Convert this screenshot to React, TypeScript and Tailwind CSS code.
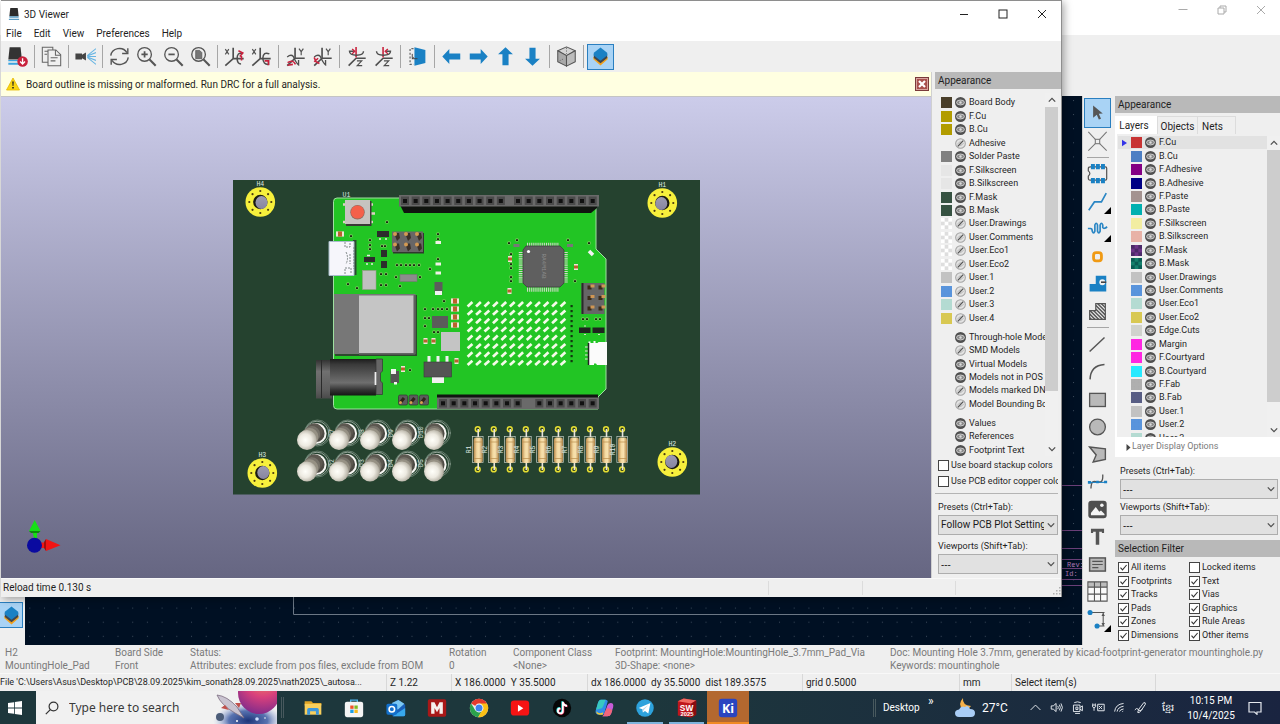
import { useState, type ReactNode } from "react";

/* ---------- shared data ---------- */

type Layer = { name: string; color?: string; on: boolean };

const viewerLayers: Layer[] = [
  { name: "Board Body", color: "#4a3f2a", on: true },
  { name: "F.Cu", color: "#b29c00", on: true },
  { name: "B.Cu", color: "#b29c00", on: true },
  { name: "Adhesive", on: false },
  { name: "Solder Paste", color: "#808080", on: true },
  { name: "F.Silkscreen", color: "#e6e6e6", on: true },
  { name: "B.Silkscreen", color: "#e6e6e6", on: true },
  { name: "F.Mask", color: "#365242", on: true },
  { name: "B.Mask", color: "#365242", on: true },
  { name: "User.Drawings", color: "checker", on: false },
  { name: "User.Comments", color: "checker", on: false },
  { name: "User.Eco1", color: "checker", on: false },
  { name: "User.Eco2", color: "checker", on: false },
  { name: "User.1", color: "#c2c2c2", on: false },
  { name: "User.2", color: "#5994dc", on: false },
  { name: "User.3", color: "#b4dbd2", on: false },
  { name: "User.4", color: "#d8c852", on: false },
];

const modelLayers: Layer[] = [
  { name: "Through-hole Models", on: true },
  { name: "SMD Models", on: false },
  { name: "Virtual Models", on: true },
  { name: "Models not in POS File", on: true },
  { name: "Models marked DNP", on: false },
  { name: "Model Bounding Boxes", on: false },
];

const textLayers: Layer[] = [
  { name: "Values", on: true },
  { name: "References", on: true },
  { name: "Footprint Text", on: true },
];

const editorLayers: Layer[] = [
  { name: "F.Cu", color: "#c83434", on: true },
  { name: "B.Cu", color: "#4d7fc4", on: true },
  { name: "F.Adhesive", color: "#840084", on: true },
  { name: "B.Adhesive", color: "#000084", on: true },
  { name: "F.Paste", color: "#a49390", on: true },
  { name: "B.Paste", color: "#00b0b0", on: true },
  { name: "F.Silkscreen", color: "#f2eda1", on: true },
  { name: "B.Silkscreen", color: "#e8b2a7", on: true },
  { name: "F.Mask", color: "mask-f", on: true },
  { name: "B.Mask", color: "mask-b", on: true },
  { name: "User.Drawings", color: "#c2c2c2", on: true },
  { name: "User.Comments", color: "#5994dc", on: true },
  { name: "User.Eco1", color: "#b4dbd2", on: true },
  { name: "User.Eco2", color: "#d8c852", on: true },
  { name: "Edge.Cuts", color: "#d0d2cd", on: true },
  { name: "Margin", color: "#ff26e2", on: true },
  { name: "F.Courtyard", color: "#ff26e2", on: true },
  { name: "B.Courtyard", color: "#26e9ff", on: true },
  { name: "F.Fab", color: "#afafaf", on: true },
  { name: "B.Fab", color: "#585d84", on: true },
  { name: "User.1", color: "#c2c2c2", on: true },
  { name: "User.2", color: "#5994dc", on: true },
  { name: "User.3", color: "#b4dbd2", on: true },
];

/* ---------- small parts ---------- */

function Swatch({ color }: { color?: string }) {
  if (!color) return <span className="size-[11px] shrink-0" />;
  const pair =
    color === "checker" ? ["#ffffff", "#dedede"] : color === "mask-f" ? ["#4a2a68", "#6c3488"] : color === "mask-b" ? ["#0a5c54", "#14806c"] : [color, color];
  return (
    <svg viewBox="0 0 12 12" className="size-[11px] shrink-0" aria-hidden="true">
      <rect width="12" height="12" fill={pair[0]} />
      {[0, 1, 2].flatMap((r) =>
        [0, 1, 2].filter((c) => (r + c) % 2 === 1).map((c) => <rect key={`${r}${c}`} x={c * 4} y={r * 4} width="4" height="4" fill={pair[1]} />),
      )}
    </svg>
  );
}

function Eye({ on }: { on: boolean }) {
  return on ? (
    <svg viewBox="0 0 12 12" className="size-[11px]" aria-hidden="true">
      <circle cx="6" cy="6" r="6" fill="#505050" />
      <ellipse cx="6" cy="6" rx="4.3" ry="2.7" fill="#8a8a8a" stroke="#dcdcdc" strokeWidth="0.9" />
      <circle cx="6" cy="6" r="1.3" fill="#dcdcdc" />
    </svg>
  ) : (
    <svg viewBox="0 0 12 12" className="size-[11px]" aria-hidden="true">
      <circle cx="6" cy="6" r="5.3" fill="#e2e2e2" stroke="#a4a4a4" strokeWidth="1.1" />
      <path d="M2.600 7 Q4 4 7 4 M5 8.400 Q8 8 9.400 5.400" fill="none" stroke="#b0b0b0" strokeWidth="0.900" />
      <path d="M3 9.200 L9 2.800" stroke="#555" strokeWidth="1.400" />
    </svg>
  );
}

function LayerRow({ layer, active, marker }: { layer: Layer; active?: boolean; marker?: boolean }) {
  const [on, setOn] = useState(layer.on);
  return (
    <li className={active ? "flex min-h-0 items-center bg-[#e2e2e2]" : "flex min-h-0 items-center"}>
      {marker && (
        <svg viewBox="0 0 6 8" className="mr-1 ml-1 h-2 w-[5px] shrink-0" aria-hidden="true">
          {active && <path d="M0 0 L6 4 L0 8Z" fill="#3434e8" />}
        </svg>
      )}
      <Swatch color={layer.color} />
      <button type="button" aria-label={`Toggle ${layer.name}`} onClick={() => setOn(!on)} className="mx-[3px] shrink-0">
        <Eye on={on} />
      </button>
      <span className="text-[9px] leading-[13px] whitespace-nowrap">{layer.name}</span>
    </li>
  );
}

function Chevron({ down = false, className = "" }: { down?: boolean; className?: string }) {
  return (
    <svg viewBox="0 0 8 8" className={`size-2 ${className}`} fill="none" stroke="#505050" strokeWidth="1.3" aria-hidden="true">
      <path d={down ? "M0.8 2.4 L4 5.6 L7.2 2.4" : "M0.8 5.6 L4 2.4 L7.2 5.6"} />
    </svg>
  );
}

function ScrollBar({ thumb }: { thumb: string }) {
  return (
    <div className="flex w-[13px] shrink-0 flex-col items-center bg-[#f0f0f0]" aria-hidden="true">
      <div className="flex h-[14px] items-center"><Chevron /></div>
      <div className={`w-full bg-[#cdcdcd] ${thumb}`} />
      <div className="mt-auto flex h-[14px] items-center"><Chevron down /></div>
    </div>
  );
}

function Picker({ id, label, value }: { id: string; label: string; value?: string }) {
  return (
    <div className="flex flex-col">
      <label htmlFor={id} className="text-[9px] leading-[16px]">{label}</label>
      <div className="relative">
        <select
          id={id}
          className={
            value
              ? "block h-5 w-full appearance-none overflow-hidden border border-[#adadad] bg-[#e1e1e1] pr-[13px] pl-[2px] text-[10px] leading-[18px] text-clip text-[#1a1a1a]"
              : "block h-5 w-full appearance-none overflow-hidden border border-[#adadad] bg-[#e1e1e1] pr-[13px] pl-[2px] font-['Noto_Sans',sans-serif] text-[10px] leading-[18px] text-[#1a1a1a]"
          }
        >
          <option>{value ?? "---"}</option>
        </select>
        <Chevron down className="pointer-events-none absolute top-[6px] right-[3px]" />
      </div>
    </div>
  );
}

function Check({ label, checked = false }: { label: string; checked?: boolean }) {
  const [value, setValue] = useState(checked);
  return (
    <label className="flex min-h-0 items-center gap-[2px] overflow-hidden text-[9px] leading-[13px] whitespace-nowrap">
      <span className="relative flex size-[11px] shrink-0">
        <input type="checkbox" checked={value} onChange={() => setValue(!value)} className="size-[11px] appearance-none border border-[#444] bg-white" />
        {value && (
          <svg viewBox="0 0 11 11" className="pointer-events-none absolute inset-0" fill="none" stroke="#333" strokeWidth="1.1" aria-hidden="true">
            <path d="M2.5 5.6 L4.5 7.8 L8.6 3" />
          </svg>
        )}
      </span>
      {label}
    </label>
  );
}

function PanelTitle({ children }: { children: ReactNode }) {
  return <h2 className="h-[17px] shrink-0 bg-[#b9b9b9] px-[3px] text-[10px] leading-[17px]">{children}</h2>;
}

function LayersGlyph() {
  return (
    <svg viewBox="0 0 22 22" className="size-[21px]" aria-hidden="true">
      <path d="M3.500 11.500 H18.500 V14 L11 20.500 L3.500 14Z" fill="#f2a11c" />
      <path d="M4 8 H18 V12.500 L11 18 L4 12.500Z" fill="#3f4650" />
      <path d="M11 1.500 L18 7 V10 L11 15.500 L4 10 V7Z" fill="#1a81c4" />
    </svg>
  );
}

/* ---------- 3D viewer toolbar ---------- */

const AXIS = "#4f4f4f";
const RED = "#c8203c";

const viewerTools: ({ label: string; icon: ReactNode; active?: boolean } | null)[] = [
  {
    label: "Reload board",
    icon: (
      <g>
        <path d="M3 1.500 h12.500 l1.500 14 h-15.500Z" fill="#333" />
        <path d="M1.500 16 h13 v1.500 h-13Z M1.500 19 h13 v2.500 h-13Z" fill="#3ba3df" />
        <circle cx="17.800" cy="17.800" r="6" fill="#c8203c" />
        <path d="M17.800 14 v6.500 M15 17.800 l2.800 2.800 2.800 -2.800" fill="none" stroke="#fff" strokeWidth="1.500" />
      </g>
    ),
  },
  null,
  {
    label: "Copy image",
    icon: (
      <g fill="#efefef" stroke="#666" strokeWidth="1.200">
        <path d="M1.500 1.500 h12 v17 h-12Z M4 6 h4 M4 9.500 h3" />
        <path d="M8 4.500 h9 l5.500 5.500 v12.500 h-14.500Z M16.500 4.500 v6 h6 M11 13.500 h8 M11 17 h5.500" />
      </g>
    ),
  },
  null,
  {
    label: "Raytracing",
    icon: (
      <g>
        <path d="M0.500 8.500 h7.500 v1.500 l4.500 -2.500 v9 l-4.500 -2.500 v1.500 h-7.500Z" fill="#444" />
        <path d="M14 11 L24 3 M14 11.500 L24 7.500 M14 12 H24 M14 12.500 L24 16.500 M14 13 L24 21" stroke="#68b5e3" strokeWidth="1.200" fill="none" />
      </g>
    ),
  },
  null,
  {
    label: "Redraw",
    icon: (
      <g fill="none" stroke="#555" strokeWidth="1.600">
        <path d="M2 11 A10 9.500 0 0 1 20.500 7.500 M22 13 A10 9.500 0 0 1 3.500 16.500" />
        <path d="M21.500 2.500 v6 h-6.500 M2.500 21.500 v-6 h6.500" />
      </g>
    ),
  },
  {
    label: "Zoom in",
    icon: (
      <g fill="none" stroke="#555">
        <circle cx="9.800" cy="9.600" r="7.800" strokeWidth="1.500" />
        <path d="M9.800 6 v7.200 M6.200 9.600 h7.200" strokeWidth="2" />
        <path d="M15.500 15.500 L22.500 22.500" strokeWidth="2.400" />
      </g>
    ),
  },
  {
    label: "Zoom out",
    icon: (
      <g fill="none" stroke="#555">
        <circle cx="9.800" cy="9.600" r="7.800" strokeWidth="1.500" />
        <path d="M6.200 9.600 h7.200" strokeWidth="2" />
        <path d="M15.500 15.500 L22.500 22.500" strokeWidth="2.400" />
      </g>
    ),
  },
  {
    label: "Zoom to fit",
    icon: (
      <g fill="none" stroke="#555">
        <circle cx="9.800" cy="9.600" r="7.800" strokeWidth="1.500" />
        <path d="M6.500 5 h4.500 l2.500 2.500 v7 h-7Z" fill="#777" strokeWidth="0.800" />
        <path d="M15.500 15.500 L22.500 22.500" strokeWidth="2.400" />
      </g>
    ),
  },
  null,
  { label: "Rotate X clockwise", icon: <AxisX flip={false} /> },
  { label: "Rotate X counterclockwise", icon: <AxisX flip /> },
  null,
  { label: "Rotate Y clockwise", icon: <AxisY flip={false} /> },
  { label: "Rotate Y counterclockwise", icon: <AxisY flip /> },
  null,
  { label: "Rotate Z clockwise", icon: <AxisZ flip={false} /> },
  { label: "Rotate Z counterclockwise", icon: <AxisZ flip /> },
  null,
  {
    label: "Flip board",
    icon: (
      <g>
        <path d="M8.500 1.500 L21 4.500 V19.500 L8.500 22.500Z" fill="#1a81c4" />
        <path d="M7.500 3 H3.500 V21 H7.500" fill="none" stroke="#666" strokeWidth="1.400" strokeDasharray="2.500 1.800" />
        <path d="M6 9 v5.500 h6 M7.500 12.500 l-1.500 2.500" fill="none" stroke="#444" strokeWidth="1.100" />
      </g>
    ),
  },
  null,
  { label: "Pan left", icon: <path d="M1.500 12 L9.500 3.500 V8.500 H22 V15.500 H9.500 V20.500Z" fill="#1a81c4" /> },
  { label: "Pan right", icon: <path d="M22.500 12 L14.500 3.500 V8.500 H2 V15.500 H14.500 V20.500Z" fill="#1a81c4" /> },
  { label: "Pan up", icon: <path d="M12 1.500 L3.500 9.500 H8.500 V22 H15.500 V9.500 H20.500Z" fill="#1a81c4" /> },
  { label: "Pan down", icon: <path d="M12 22.500 L3.500 14.500 H8.500 V2 H15.500 V14.500 H20.500Z" fill="#1a81c4" /> },
  null,
  {
    label: "Orthographic projection",
    icon: (
      <g stroke="#555" strokeWidth="1.200" strokeLinejoin="round">
        <path d="M12 1 L22 5.500 L12 11 L2 5.500Z" fill="#d4d4d4" />
        <path d="M2 5.500 L12 11 V23 L2 18Z" fill="#a9a9a9" />
        <path d="M22 5.500 L12 11 V23 L22 18Z" fill="#bcbcbc" />
        <path d="M12 2 V9 M4 17 L9 14.500" strokeWidth="0.800" strokeDasharray="1.500 1.500" fill="none" />
      </g>
    ),
  },
  null,
  { label: "Show appearance manager", icon: null, active: true },
];

function AxisX({ flip }: { flip: boolean }) {
  return (
    <g fill="none" stroke={AXIS}>
      <path d="M1.500 3.500 L5.500 9.500 M5.500 3.500 L1.500 9.500" strokeWidth="1.300" />
      <path d="M10.500 2 V14.500 L1.500 22.500 M10.500 14.500 H22.500" strokeWidth="1.900" />
      <path d={flip ? "M21 9 Q14 6 13.500 14 Q14 21.500 20 21 V16" : "M21 8.500 Q15 7 15 14 Q15 20.500 19.500 20.500"} strokeWidth="1.700" />
      <path d={flip ? "M15.500 17 h4.500 v5" : "M16.500 5.500 L21.500 8 L18 12 M20 11.500 v5"} stroke={RED} strokeWidth="1.800" />
    </g>
  );
}

function AxisY({ flip }: { flip: boolean }) {
  return (
    <g fill="none" stroke={AXIS}>
      <path d="M16 3 L18.500 6.500 L21 3 M18.500 6.500 V10.500" strokeWidth="1.300" />
      <path d="M11.500 2 V14 L2.500 22.500 M11.500 14 H22.500" strokeWidth="1.900" />
      <path d="M2.500 12.500 Q7 9 9.500 12 Q13 20 15.500 21.500 V16" strokeWidth="1.500" />
      <path d={flip ? "M2.500 13 l2 5 4 2 M2.500 18 l4.500 -4" : "M3 19 q6 -4 9 2 M3 22 l6 -1"} stroke={RED} strokeWidth="1.800" />
    </g>
  );
}

function AxisZ({ flip }: { flip: boolean }) {
  return (
    <g fill="none" stroke={AXIS}>
      <path d="M11.500 14 L3 22.500 M11.500 14 H22.500" strokeWidth="1.900" />
      <path d="M11.500 1 V13" stroke={RED} strokeWidth="1.800" />
      <path d={flip ? "M4 6 Q4 10.500 12 10.500 Q20 10.500 20 6 H15" : "M20 6 Q20 10.500 12 10.500 Q4 10.500 4 6 H9"} strokeWidth="1.600" />
      <path d={flip ? "M17 3.500 L14 6 L17 9" : "M7 3.500 L10 6 L7 9"} stroke={RED} strokeWidth="1.600" />
      <path d="M12.500 17 H18 L12.800 22.500 H18.500" strokeWidth="1.300" />
    </g>
  );
}

function ViewerToolbar() {
  return (
    <div role="toolbar" aria-label="3D viewer" className="flex h-[31px] shrink-0 items-center bg-[#efefef] pl-[3px]">
      {viewerTools.map((tool, i) =>
        tool === null ? (
          <span key={i} className="mx-[3px] h-[23px] w-px bg-[#a6a6a6]" />
        ) : (
          <button
            key={tool.label}
            type="button"
            aria-label={tool.label}
            aria-pressed={tool.active}
            className={tool.active ? "flex h-[26px] w-[27px] items-center justify-center border border-[#2a7fc0] bg-[#a9d3f5]" : "flex h-[26px] w-[27px] items-center justify-center"}
          >
            {tool.icon ? <svg viewBox="0 0 24 24" className="size-[21px]">{tool.icon}</svg> : <LayersGlyph />}
          </button>
        ),
      )}
    </div>
  );
}

/* ---------- 3D board drawing ---------- */

const steps = (n: number) => Array.from({ length: n }, (_, i) => i);

function MountingHole({ x, y, label, dx = 0, dy = 0 }: { x: number; y: number; label: string; dx?: number; dy?: number }) {
  return (
    <g>
      <circle cx={x} cy={y} r="14.8" fill="#f7f03c" />
      <circle cx={x} cy={y} r="7.2" fill="#1b1a12" />
      <ellipse cx={x + dx} cy={y + dy} rx="6" ry="6.4" fill="url(#hole)" />
      {steps(8).map((i) => (
        <circle key={i} cx={x + 11 * Math.cos((i * Math.PI) / 4)} cy={y + 11 * Math.sin((i * Math.PI) / 4)} r="1.1" fill="#4a3a10" />
      ))}
      <text x={x} y={y - 16} fontSize="6.5" textAnchor="middle" fill="#dfe8e0" fontFamily="Liberation Mono, monospace">{label}</text>
    </g>
  );
}

function Led({ x, y, rx, ry }: { x: number; y: number; rx: number; ry: number }) {
  const bx = rx - 1.5;
  const by = ry - 2;
  return (
    <g fill="none" strokeLinecap="round">
      <circle cx={rx + 1.5} cy={ry - 0.5} r="13" stroke="#8fa294" strokeWidth="0.6" />
      <circle cx={rx + 1} cy={ry - 0.5} r="11.8" stroke="#c3cec6" strokeWidth="0.7" />
      <circle cx={rx} cy={ry} r="9.6" fill="#4d4a44" stroke="#f6f6f2" strokeWidth="2" />
      <path d={`M${x} ${y} L${bx} ${by}`} stroke="#5c5850" strokeWidth="16.5" />
      <path d={`M${x} ${y} L${x + (bx - x) * 0.65} ${y + (by - y) * 0.65}`} stroke="#77736a" strokeWidth="16.5" />
      <path d={`M${x} ${y} L${x + (bx - x) * 0.35} ${y + (by - y) * 0.35}`} stroke="#969184" strokeWidth="17.5" />
      <circle cx={x} cy={y + 0.5} r="10" fill="url(#led)" />
    </g>
  );
}

function Resistor({ x, n }: { x: number; n: number }) {
  return (
    <g>
      <rect x={x - 5.2} y="436.5" width="10.6" height="26" fill="none" stroke="#c6cfc8" strokeWidth="0.7" />
      <circle cx={x} cy="429.2" r="2.4" fill="#2a3d20" stroke="#e6de32" strokeWidth="1.5" />
      <circle cx={x} cy="469.4" r="2.4" fill="#2a3d20" stroke="#e6de32" strokeWidth="1.5" />
      <path d={`M${x + 0.5} 429 V437 M${x + 0.5} 462 V470`} stroke="#e9e4d8" strokeWidth="1.6" />
      <rect x={x - 4} y="437.5" width="9" height="25.5" rx="2.4" fill="url(#res)" />
      <path d={`M${x - 3.6} 442 h8.2 M${x - 3.6} 458.5 h8.2`} stroke="#b98d4a" strokeWidth="0.7" />
      <text x={x - 9} y="449.5" fontSize="6.4" fill="#dfe8e0" textAnchor="middle" fontFamily="Liberation Mono, monospace" transform={`rotate(-90 ${x - 9} 449.5)`} dy="2">{`R${n}`}</text>
    </g>
  );
}

function Cap({ x, y, v = false }: { x: number; y: number; v?: boolean }) {
  return v ? (
    <g>
      <rect x={x - 2} y={y - 3} width="4" height="6" fill="#eee6d6" />
      <rect x={x - 2} y={y - 1.5} width="4" height="3" fill="#b8632c" />
    </g>
  ) : (
    <g>
      <rect x={x - 4} y={y - 2.6} width="8" height="5.2" fill="#efe6d4" />
      <rect x={x - 2} y={y - 2.6} width="4" height="5.2" fill="#b8632c" />
    </g>
  );
}

function Pads({ at, fill = "#14300f" }: { at: number[][]; fill?: string }) {
  return (
    <g>
      {at.map(([x, y]) => (
        <g key={`${x}-${y}`}>
          <rect x={x - 1.3} y={y - 1.3} width="2.6" height="2.6" fill="#d9cf9a" />
          <rect x={x - 1} y={y - 0.8} width="2" height="1.8" fill={fill} />
        </g>
      ))}
    </g>
  );
}

function Board() {
  const ledSphere = [307, 339, 370, 402, 434];
  const ledRing = [316, 346.5, 376.5, 406.5, 436];
  const topPins = [...steps(10).map((i) => 405 + i * 10.65), ...steps(8).map((i) => 518 + i * 10.67)];
  const botPins = [...steps(8).map((i) => 443 + i * 10.67), ...steps(6).map((i) => 539.3 + i * 10.67)];
  return (
    <svg viewBox="225 172 483 330" className="h-[330px] w-[483px] shrink-0" role="img" aria-label="Board model">
      <defs>
        <linearGradient id="hole" x1="0" y1="0" x2="0" y2="1"><stop offset="0" stopColor="#9c9ab2" /><stop offset="1" stopColor="#8886a0" /></linearGradient>
        <radialGradient id="led" cx="0.42" cy="0.5" r="0.6"><stop offset="0" stopColor="#fffffa" /><stop offset="0.5" stopColor="#edeae1" /><stop offset="0.85" stopColor="#bdb9ad" /><stop offset="1" stopColor="#918d82" /></radialGradient>
        <linearGradient id="res" x1="0" y1="0" x2="1" y2="0"><stop offset="0" stopColor="#b8874a" /><stop offset="0.35" stopColor="#f3d9a0" /><stop offset="0.6" stopColor="#f8e2b0" /><stop offset="1" stopColor="#b28447" /></linearGradient>
        <linearGradient id="jack" x1="0" y1="0" x2="0" y2="1"><stop offset="0" stopColor="#1c1c1c" /><stop offset="0.15" stopColor="#3a3a3a" /><stop offset="0.65" stopColor="#6f6f6f" /><stop offset="0.85" stopColor="#333" /><stop offset="1" stopColor="#151515" /></linearGradient>
        <linearGradient id="flange" x1="0" y1="0" x2="0" y2="1"><stop offset="0" stopColor="#333" /><stop offset="0.3" stopColor="#707070" /><stop offset="0.8" stopColor="#5c5c5c" /><stop offset="1" stopColor="#4a4a4a" /></linearGradient>
      </defs>

      <rect x="233" y="180" width="467" height="314.5" fill="#25422f" />

      {/* controller board */}
      <path d="M337 198 H596 V249 L606 259 V389 L598 397 V409 H337 Q333.500 409 333.500 405.500 V201.500 Q333.500 198 337 198Z" fill="#22c524" stroke="#9fe0a0" strokeWidth="1" />
      <text x="346.500" y="197" fontSize="6.500" textAnchor="middle" fill="#dfe8e0" fontFamily="Liberation Mono, monospace">U1</text>

      {/* top header */}
      <path d="M400 205 H597 V208 L591 213 H404Z" fill="#10140f" />
      <rect x="399" y="195" width="200" height="11.500" fill="#6a6a6a" />
      {topPins.map((x) => (
        <g key={x}><rect x={x - 4} y="196.500" width="8" height="8.500" fill="#4b4b4b" /><rect x={x - 2} y="199" width="4" height="4" fill="#111" /></g>
      ))}

      {/* bottom header */}
      <path d="M437 394.500 H598 V400 H437Z" fill="#111411" />
      <rect x="437" y="397.500" width="162" height="11.500" fill="#6a6a6a" />
      {botPins.map((x) => (
        <g key={x}><rect x={x - 4} y="399" width="8" height="8.500" fill="#4b4b4b" /><rect x={x - 2} y="401.300" width="4" height="4" fill="#111" /></g>
      ))}

      {/* reset button */}
      <path d="M343 204.500 h30 M343 222 h30 M371 213.500 h4" stroke="#ddd3c4" strokeWidth="2.500" />
      <rect x="346" y="201" width="25.500" height="25" fill="#3a3a36" />
      <rect x="345" y="200" width="25" height="24" fill="#c6c4c0" />
      <circle cx="357.500" cy="212.300" r="7.200" fill="#8e6a5e" />
      <circle cx="357.500" cy="212" r="6.600" fill="#f4604a" />

      {/* usb */}
      <path d="M353 240 h3.500 v35 h-3.500Z" fill="#2b4a30" />
      <path d="M329 241.500 h25 v34 h-25Z" fill="#f6f6fb" stroke="#a9bccb" strokeWidth="1" />
      <path d="M345 242 v5 h5 v-4 M346 252 q3 6 0 12 M350 254 v10 M345 274 v-6 h6 v5 M354 247 v22" fill="none" stroke="#66706e" strokeWidth="0.800" strokeDasharray="2 1" />

      {/* 2x3 header */}
      <rect x="393" y="233" width="31" height="20.500" fill="#30382e" />
      <rect x="392" y="231.500" width="31" height="20.500" fill="#686666" />
      {[395, 406, 417].flatMap((x) => [234, 244.500].map((y) => (
        <g key={`${x}-${y}`}><path d={`M${x - 1} ${y - 1} h5 l1 5 l-3 3Z`} fill="#3a3028" /><circle cx={x} cy={y} r="2" fill="#d39a52" /></g>
      )))}

      {/* small black transistors */}
      <path d="M377 231 h12 v6 h-12Z M364 257 h11 v5 h-11Z M381 250 h6 v7 h-6Z M381 261 h6 v7 h-6Z" fill="#2c2c2c" />
      <path d="M379 239 h2 M385 239 h2 M366 264 h2 M371 264 h2 M367 255.500 h3" stroke="#e8e8e0" strokeWidth="1.500" />
      <Pads at={[[387, 222], [351, 236], [370, 240], [370, 245], [370, 249], [382, 246], [385, 246], [397, 265], [401, 265], [406, 265], [410, 265], [414, 265], [419, 265], [348, 284], [357, 288], [381, 274], [386, 274], [381, 285], [386, 285], [396, 277], [420, 277], [400, 286], [430, 269], [438, 234], [438, 239], [438, 259]]} />
      <path d="M435.500 241 h5.500 v3 h-5.500Z M435.500 262.500 h5.500 v3 h-5.500Z M435.500 271.500 h5.500 v3 h-5.500Z" fill="#f0f0e6" />
      <Cap x={340} y={234} />
      <rect x="362.500" y="270.500" width="13.500" height="19" fill="#c0c0c0" stroke="#9a9a8a" strokeWidth="0.600" />
      <rect x="400" y="274.500" width="17" height="7" fill="#8c8c8c" stroke="#777" strokeWidth="0.600" />
      <rect x="434.500" y="282" width="8" height="10" fill="#5c5c5c" /><path d="M435 291 h7 v4 h-7Z" fill="#f2f2f2" />

      {/* radio module */}
      <rect x="335" y="295" width="82" height="61" fill="#2d4a2e" />
      <rect x="334" y="294" width="81.500" height="60" fill="#777" />
      <rect x="359" y="295.500" width="54.500" height="57.500" fill="#c5c5c5" />
      <path d="M414.500 295 V354 H359" fill="none" stroke="#5f5f5f" strokeWidth="1.500" />

      {/* power area */}
      {[301, 309, 317, 325].map((y) => <Cap key={y} x={455} y={y} />)}
      <Pads at={[[425, 309], [433, 309], [438, 309], [442, 309], [447, 309], [444, 301], [425, 318], [429, 318], [425, 326], [434, 332], [438, 332]]} />
      <rect x="432" y="316" width="16" height="12" fill="#5a5a5a" />
      <rect x="441" y="332" width="19" height="19" fill="#c4c4c4" />
      <Cap x={425.500} y={341} v /><Cap x={433.500} y={341} v />
      <path d="M427.500 356 h3 v7 h-3Z M436.500 356 h3 v7 h-3Z M445.500 356 h3 v7 h-3Z M432 376 h12 v7 h-12Z" fill="#f1f1f1" />
      <rect x="424" y="362" width="27.500" height="15" fill="#545454" stroke="#3a3a3a" strokeWidth="0.600" />
      <Cap x={456.500} y={361} v /><Cap x={403} y={369} v />
      <Pads at={[[410, 370]]} />
      <rect x="390.500" y="371" width="8.500" height="12" fill="#555" /><path d="M391 369 h5 v5 h-5Z M394 382 h3 v2.500 h-3Z" fill="#f4f4f4" />

      {/* 3-pin header */}
      {[403, 413.500, 424].map((x) => (
        <g key={x}><rect x={x - 4.500} y="395" width="9" height="10" rx="1.500" fill="#5c5c5c" stroke="#333" strokeWidth="0.700" /><path d={`M${x - 3} 403 l4 -5`} stroke="#2e2418" strokeWidth="3" /><circle cx={x - 2.500} cy="402.500" r="1.500" fill="#d9a050" /></g>
      ))}

      {/* power jack */}
      <rect x="316" y="360" width="16" height="38.500" fill="url(#flange)" />
      <path d="M321.500 360 v38" stroke="#2a2a2a" strokeWidth="1" />
      <rect x="330" y="359" width="46" height="36.500" fill="url(#jack)" />
      <path d="M376 359 h6.500 v12 l-2 2 v8 l2 2 v11.500 h-6.500Z" fill="#666" stroke="#333" strokeWidth="0.700" />
      <path d="M375.500 372 v13" stroke="#eee" strokeWidth="1.800" />

      {/* microcontroller */}
      <path d="M527 245 H559" stroke="#cfd8c8" strokeWidth="4.500" strokeDasharray="1 0.900" />
      <path d="M527 289.500 H559" stroke="#cfd8c8" strokeWidth="4.500" strokeDasharray="1 0.900" />
      <path d="M521 252 V283 M565.500 252 V283" stroke="#cfd8c8" strokeWidth="4.500" strokeDasharray="1 0.900" />
      <path d="M526 246 H560 L564 250 V283 L560 287 H527 L523 283 V250Z" fill="#5f5f5f" stroke="#3e3e3e" strokeWidth="0.800" />
      <circle cx="528.500" cy="251.500" r="1.600" fill="#fff" />
      <text x="543" y="266" fontSize="6" fill="#8d8d8d" textAnchor="middle" fontFamily="Liberation Mono, monospace" transform="rotate(90 543 266)" dy="1">RA4M1AB</text>
      <Pads at={[[509, 243], [517, 240], [511, 254], [511, 264], [511, 268], [511, 277], [511, 281], [568, 240], [589, 243], [575, 281]]} />
      <Cap x={510} y={259} v /><Cap x={509.500} y={291} v /><Cap x={576} y={267} v />
      <path d="M513.500 244 h6 v3 h-6Z M567 244 h6 v3 h-6Z" fill="#777" />
      <path d="M589 251 l4 4" stroke="#f4f4f4" strokeWidth="3.500" />

      {/* programming header */}
      <rect x="581.500" y="283" width="23" height="31" fill="#666" /><path d="M581.500 283 h2 v31 h-2Z" fill="#2a2a2a" />
      {[590, 601].flatMap((x) => [287, 297.500, 308].map((y) => (
        <g key={`${x}-${y}`}><path d={`M${x - 2.500} ${y + 0.500} h4`} stroke="#3a2a18" strokeWidth="4" /><path d={`M${x + 0.500} ${y - 1} h4`} stroke="#cf9654" strokeWidth="3" /></g>
      )))}
      <Pads at={[[583, 319], [587, 319], [596, 319], [600, 319]]} />
      <path d="M579 327.500 h11.500 v5.500 h-11.500Z M592.500 327.500 h12 v5.500 h-12Z" fill="#1f241f" />
      <path d="M584 326 h2 M584 334.500 h2 M598 334.500 h2" stroke="#d8d8c8" strokeWidth="1.200" />

      {/* led matrix */}
      {steps(8).flatMap((r) => steps(12).map((c) => {
        const x = 470 + c * 8.45;
        const y = 304.200 + r * 8.380;
        return <path key={`${r}-${c}`} d={`M${x - 2.400} ${y + 2.200} L${x + 2.400} ${y - 2.200}`} stroke="#f5fbe9" strokeWidth="2.700" />;
      }))}
      {steps(12).map((i) => <rect key={i} x="570.500" y={305 + i * 5} width="2.200" height="2.200" fill="#11380f" />)}

      {/* jst connector */}
      <path d="M585 347 h3 M585 351 h3 M585 355 h3 M585 359 h3" stroke="#e4e4dc" strokeWidth="1.200" />
      <path d="M588.500 341.500 h2 v1.500 h3 v-2 h2 v2 h2 l1 -1 H607 V365 H597 l-1 -1.500 h-2 v1.500 h-5.500Z" fill="#fbfbfb" /><path d="M588.500 343 V365" stroke="#222" strokeWidth="1.500" />

      {/* led references sit under the parts */}
      <g fontSize="6.500" fill="#dfe8e0" fontFamily="Liberation Mono, monospace">
        {[334, 363.500, 393].map((x, i) => (
          <g key={x}>
            <text transform={`rotate(-90 ${x} 437)`} x={x} y="437">{`D${i + 7}`}</text>
            <text transform={`rotate(-90 ${x} 467)`} x={x} y="467">{`D${i + 2}`}</text>
          </g>
        ))}
        <text transform="rotate(-90 423 438)" x="423" y="438">D10</text>
        <text transform="rotate(-90 423 467)" x="423" y="467">D5</text>
      </g>
      {ledSphere.map((x, i) => <Led key={`a${x}`} x={x} y={439.500} rx={ledRing[i]} ry={433.500} />)}
      {ledSphere.map((x, i) => <Led key={`b${x}`} x={x} y={471} rx={ledRing[i]} ry={464.500} />)}

      {steps(10).map((i) => <Resistor key={i} x={477.700 + i * 16.040} n={i + 1} />)}

      <MountingHole x={260.300} y={202} label="H4" dx={1.200} dy={0.500} />
      <MountingHole x={662.300} y={203} label="H1" dx={-1} dy={0.500} />
      <MountingHole x={262.300} y={473} label="H3" dx={1} dy={-0.500} />
      <MountingHole x={672.300} y={462} label="H2" dx={-1} dy={-0.500} />
    </svg>
  );
}

/* ---------- 3D viewer window ---------- */

function Viewer() {
  return (
    <section aria-label="3D Viewer" className="absolute top-0 right-[218px] bottom-[127px] left-px z-10 flex flex-col border-t border-r border-[#8e8e8e] bg-[#efefef] shadow-[2px_2px_8px_rgba(0,0,0,0.35)]">
      <header className="flex h-[26px] shrink-0 items-center bg-white pl-[7px]">
        <svg viewBox="0 0 12 14" className="mr-1 h-[13px] w-[12px]" aria-hidden="true">
          <path d="M2 0 h8 l1 9 h-10Z" fill="#2c2c2c" /><path d="M1 9 h10 v1.500 h-10Z M0.500 11.500 h11 v1.500 h-11Z" fill="#5a9cc4" />
        </svg>
        <h1 className="grow text-[10px]">3D Viewer</h1>
        <button type="button" aria-label="Minimize" className="flex w-[39px] justify-center">
          <svg viewBox="0 0 10 10" className="size-[10px]" stroke="#222" fill="none"><path d="M1 5.500 H9" /></svg>
        </button>
        <button type="button" aria-label="Maximize" className="flex w-[39px] justify-center">
          <svg viewBox="0 0 10 10" className="size-[10px]" stroke="#222" fill="none"><rect x="1" y="1" width="8" height="8" /></svg>
        </button>
        <button type="button" aria-label="Close" className="flex w-[39px] justify-center">
          <svg viewBox="0 0 10 10" className="size-[10px]" stroke="#222" fill="none"><path d="M1 1 L9 9 M9 1 L1 9" /></svg>
        </button>
      </header>
      <nav className="flex h-[14px] shrink-0 items-center gap-[12px] bg-white pl-[5px] text-[10px] leading-[14px]">
        {["File", "Edit", "View", "Preferences", "Help"].map((m) => <button key={m} type="button">{m}</button>)}
      </nav>
      <ViewerToolbar />
      <div className="flex min-h-0 flex-1">
        <main className="flex min-w-0 flex-1 flex-col">
          <div role="status" className="flex h-[25px] shrink-0 items-center border-b border-[#c4c4c4] bg-[#ffffe1] pr-[2px] pl-[5px] text-[10px]">
            <svg viewBox="0 0 14 14" className="mr-[6px] size-[14px]" aria-hidden="true">
              <path d="M7 1 L13.500 13 H0.500Z" fill="#f8d614" stroke="#e6b800" strokeWidth="0.800" strokeLinejoin="round" /><path d="M6.200 4.500 h1.600 l-0.400 4.500 h-0.800Z M6.200 10 h1.600 v1.600 h-1.600Z" fill="#222" />
            </svg>
            <span className="grow">Board outline is missing or malformed. Run DRC for a full analysis.</span>
            <button type="button" aria-label="Dismiss">
              <svg viewBox="0 0 14 14" className="size-[14px]"><rect x="0.500" y="0.500" width="13" height="13" fill="#d8a49e" stroke="#7a3a3a" /><rect x="2" y="2" width="10" height="10" fill="#a8504c" /><path d="M4 4 L10 10 M10 4 L4 10" stroke="#fff" strokeWidth="2.200" /></svg>
            </button>
          </div>
          <div className="relative flex min-h-0 flex-1 items-center justify-center overflow-hidden bg-linear-to-b from-[#ccccea] to-[#666682] pb-[2px] pl-px">
            <Board />
            <svg viewBox="0 0 36 36" className="absolute bottom-[23px] left-[25px] size-9" aria-label="Axes" role="img">
              <path d="M9 24 L6.500 12 H3 L8.700 1 L14.500 12 H11 V24Z" fill="#16e016" /><path d="M3 12 h11.500 l-2 2 h-7.500Z" fill="#0b8a0b" />
              <path d="M8 23.500 H20 V20 L34.500 26.200 L20 32 V29 H8Z" fill="#f01414" /><path d="M20 20 v12 l-2 -3 v-6Z" fill="#a00c0c" />
              <circle cx="8.500" cy="26.200" r="7.500" fill="#0a0aa0" />
            </svg>
          </div>
        </main>
        <aside className="flex w-[130px] shrink-0 flex-col border-l border-[#d0d0d0] pl-[3px]">
          <PanelTitle>Appearance</PanelTitle>
          <div className="mt-1 mr-[3px] flex min-h-0 flex-1 overflow-hidden">
            <div className="flex min-w-0 flex-1 flex-col gap-[6px] overflow-hidden pt-[3px] pl-[6px]">
              <ul className="grid h-[229px] shrink-0 auto-rows-fr">{viewerLayers.map((l) => <LayerRow key={l.name} layer={l} />)}</ul>
              <ul className="grid h-[80px] shrink-0 auto-rows-fr">{modelLayers.map((l) => <LayerRow key={l.name} layer={l} />)}</ul>
              <ul className="grid h-[40px] shrink-0 auto-rows-fr">{textLayers.map((l) => <LayerRow key={l.name} layer={l} />)}</ul>
            </div>
            <ScrollBar thumb="h-[284px]" />
          </div>
          <div className="mr-[3px] flex h-[38px] shrink-0 flex-col justify-center gap-[3px] overflow-hidden border-b border-[#b4b4b4] pb-[2px] pl-[3px]">
            <Check label="Use board stackup colors" />
            <Check label="Use PCB editor copper colors" />
          </div>
          <div className="mr-[3px] flex shrink-0 flex-col gap-[3px] pt-[5px] pb-1 pl-[3px]">
            <Picker id="viewer-presets" label="Presets (Ctrl+Tab):" value="Follow PCB Plot Settings" />
            <Picker id="viewer-viewports" label="Viewports (Shift+Tab):" />
          </div>
        </aside>
      </div>
      <footer className="flex h-[19px] shrink-0 border-t border-[#f8f8f8] pl-[2px] text-[10px] leading-[18px]">
        <span className="flex-1">Reload time 0.130 s</span>
        <span className="my-[2px] w-[94px] border-l border-[#dcdcdc]" />
        <span className="my-[2px] w-[93px] border-l border-[#dcdcdc]" />
        <span className="my-[2px] flex w-[106px] items-end justify-end border-l border-[#dcdcdc]">
          <svg viewBox="0 0 9 9" className="size-[9px]" fill="#b0b0b0" aria-hidden="true"><path d="M7 1 h1.500 v1.500 h-1.500Z M4 4 h1.500 v1.500 h-1.500Z M7 4 h1.500 v1.500 h-1.500Z M1 7 h1.500 v1.500 h-1.500Z M4 7 h1.500 v1.500 h-1.500Z M7 7 h1.500 v1.500 h-1.500Z" /></svg>
        </span>
      </footer>
    </section>
  );
}

/* ---------- PCB editor behind ---------- */

const corner = <path d="M24 17 V24 H17Z" fill="#000" />;

const editorTools: ({ label: string; icon: ReactNode; active?: boolean } | null)[] = [
  { label: "Select", active: true, icon: <path d="M7 4 L18 13 L13.500 13.500 L16 19 L13.500 20 L11.200 14.700 L7 18Z" fill="#555" /> },
  { label: "Local ratsnest", icon: <g stroke="#777" strokeWidth="1.200" fill="none"><path d="M1.500 1 L9.500 9.500 M22.500 1 L14.500 9.500 M1.500 22.500 L9.500 14.500 M22.500 22.500 L14.500 14.500" /><rect x="9.500" y="9.500" width="5" height="5" /></g> },
  null,
  { label: "Place footprint", icon: <g><path d="M4 4.500 H21 Q22.500 4.500 22.500 6 V18 Q22.500 19.500 21 19.500 H3.500 Q1.500 19.500 1.500 17.500 V15 Q5 12 1.500 9 V6.500 Q1.500 4.500 4 4.500Z" fill="none" stroke="#555" strokeWidth="1.400" /><path d="M4.500 1 h4.500 v6 h-4.500Z M10.200 1 h4.500 v6 h-4.500Z M16 1 h4.500 v6 h-4.500Z M4.500 17 h4.500 v6 h-4.500Z M10.200 17 h4.500 v6 h-4.500Z M16 17 h4.500 v6 h-4.500Z" fill="#1a81c4" /></g> },
  { label: "Route track", icon: <g><path d="M2 22 L8.500 12.500 H16.500 L22 2.500" fill="none" stroke="#2a86c4" strokeWidth="1.900" /></g> },
  { label: "Tune length", icon: <g><path d="M1 12 H4 Q6 12 6 15 Q7.500 19 9 15 V8 Q10.500 4 12 8 V15 Q13.500 19 15 15 V8 Q16.500 4 18 8 V11 Q19.500 13 23 10" fill="none" stroke="#2a86c4" strokeWidth="1.900" /></g> },
  { label: "Add via", icon: <rect x="7.500" y="7.500" width="9" height="9.500" rx="3" fill="none" stroke="#f09a14" strokeWidth="3.200" /> },
  { label: "Add zone", icon: <g><path d="M10 3 H22 V21 H3 V12.500 H10Z" fill="#1a81c4" /><circle cx="17.500" cy="10.500" r="3.400" fill="#efefef" /><path d="M16 10.500 h6" stroke="#444" strokeWidth="1.800" /></g> },
  { label: "Add rule area", icon: <g><clipPath id="hatch"><path d="M10 3 H21 V21 H3 V11 H10Z" /></clipPath><g clipPath="url(#hatch)" stroke="#555" strokeWidth="1.700">{steps(9).map((i) => <path key={i} d={`M${-14 + i * 4.200} 2 l20 20`} />)}</g><path d="M10 3 H21 V21 H3 V11 H10Z" fill="none" stroke="#555" strokeWidth="1.300" /></g> },
  null,
  { label: "Draw line", icon: <path d="M3 20 L20 4" stroke="#555" strokeWidth="1.700" /> },
  { label: "Draw arc", icon: <path d="M3.500 21 Q4 5 20 4" fill="none" stroke="#555" strokeWidth="1.700" /> },
  { label: "Draw rectangle", icon: <rect x="3" y="5" width="18" height="15" fill="#b9b9b9" stroke="#555" strokeWidth="1.500" /> },
  { label: "Draw circle", icon: <circle cx="12" cy="12.500" r="9" fill="#b9b9b9" stroke="#555" strokeWidth="1.500" /> },
  { label: "Draw polygon", icon: <path d="M3 3.500 L21 5.500 V17.500 L7 20.500 L10.500 12.500Z" fill="#b9b9b9" stroke="#555" strokeWidth="1.600" /> },
  { label: "Draw bezier", icon: <g fill="none"><path d="M4.500 20 C5 9 9 12.500 12 12.500 S18.500 14 18 4" stroke="#555" strokeWidth="1.500" /><path d="M2 13 H22" stroke="#1a81c4" strokeWidth="1.200" /><path d="M1 11.500 h3.500 v3 h-3.500Z M19.500 11 h3.500 v3 h-3.500Z M10.500 11 h3 v3 h-3Z" fill="#1a81c4" /></g> },
  { label: "Place image", icon: <g><rect x="1.500" y="2" width="21" height="20" rx="3.500" fill="#4f4f4f" /><path d="M4.500 18.500 V16 L10 9 L14 14.500 L16 13 L20 17 V18.500Z" fill="#f4f4f4" /><circle cx="17" cy="7" r="2" fill="#f4f4f4" /></g> },
  { label: "Place text", icon: <path d="M4.500 3 H19.500 V8 H17 V6.500 H14 V21.500 H10 V6.500 H7 V8 H4.500Z" fill="#555" /> },
  { label: "Place text box", icon: <g><rect x="3" y="4.500" width="18" height="15" fill="#b9b9b9" stroke="#555" strokeWidth="1.700" /><path d="M6 8.500 H18 M6 12 H18 M6 15.500 H13" stroke="#555" strokeWidth="1.300" /></g> },
  { label: "Place table", icon: <g><rect x="1" y="1" width="22" height="22" fill="#fafafa" /><path d="M1 1 h22 v6 h-22Z" fill="#bcbcbc" /><path d="M1 1 h22 v22 h-22Z M1 7 h22 M1 15 h22 M8.500 1 v22 M15.500 1 v22" fill="none" stroke="#555" strokeWidth="1.200" /></g> },
  { label: "Add dimension", icon: <g><path d="M3 4 H20 M11 19.500 H20 M18.500 4.500 V19" stroke="#555" strokeWidth="1.200" /><path d="M16.500 8 l2 -3.500 2 3.500Z M16.500 16 l2 3.500 2 -3.500Z" fill="#555" /><circle cx="3.500" cy="4" r="2.900" fill="#1a81c4" /><circle cx="11.500" cy="19.500" r="2.900" fill="#1a81c4" /></g> },
];

function EditorCanvas() {
  return (
    <svg className="min-h-0 min-w-0 flex-1 bg-[#001023]" role="img" aria-label="PCB canvas">
      <defs>
        <pattern id="dots" x="19" y="4" width="14.700" height="14.100" patternUnits="userSpaceOnUse"><rect width="1" height="1" fill="#3d4b5c" /></pattern>
      </defs>
      <rect width="100%" height="100%" fill="url(#dots)" />
      <path d="M268.500 500 V518.500 H1060" fill="none" stroke="#6b7785" />
      <path d="M1030 389.500 H1060 M1030 434.500 H1060 M1030 452.500 H1060 M1030 463.500 H1060 M1030 472.500 H1060 M1030 483.500 H1060 M1030 489.500 H1060" stroke="#6a3f78" />
      <g fontSize="7" fill="#b078b8" fontFamily="Liberation Mono, monospace">
        <text x="1042" y="471">Rev:</text>
        <text x="1040" y="480">Id: 1</text>
      </g>
    </svg>
  );
}

const filters: [string, boolean][] = [
  ["All items", true], ["Locked items", false],
  ["Footprints", true], ["Text", true],
  ["Tracks", true], ["Vias", true],
  ["Pads", true], ["Graphics", true],
  ["Zones", true], ["Rule Areas", true],
  ["Dimensions", true], ["Other items", true],
];

function EditorPanel() {
  return (
    <aside className="flex w-[165px] shrink-0 flex-col bg-[#efefef]">
      <PanelTitle>Appearance</PanelTitle>
      <div role="tablist" className="mt-[3px] flex h-[18px] shrink-0 text-[10px] leading-[19px]">
        <button type="button" role="tab" aria-selected="true" className="w-[42px] bg-white pr-1">Layers</button>
        <button type="button" role="tab" aria-selected="false" className="w-[41px] border border-b-0 border-[#dcdcdc]">Objects</button>
        <button type="button" role="tab" aria-selected="false" className="w-[38px] border border-b-0 border-l-0 border-[#dcdcdc] pr-2">Nets</button>
      </div>
      <div className="flex min-h-0 flex-1 overflow-hidden border-l-2 border-white pt-[2px]">
        <ul className="grid h-[309px] min-w-0 flex-1 auto-rows-fr pl-px">
          {editorLayers.map((l, i) => <LayerRow key={l.name} layer={l} active={i === 0} marker />)}
        </ul>
        <ScrollBar thumb="h-[252px]" />
      </div>
      <button type="button" className="flex h-[20px] shrink-0 items-center gap-px bg-white pl-[11px] text-left text-[9px] text-[#7b7b7b]">
        <svg viewBox="0 0 5 7" className="h-[7px] w-[5px]" aria-hidden="true"><path d="M0.500 0 L4.500 3.500 L0.500 7Z" fill="#444" /></svg>
        Layer Display Options
      </button>
      <div className="flex shrink-0 flex-col pt-[6px] pr-[2px] pb-[5px] pl-[5px]">
        <Picker id="presets" label="Presets (Ctrl+Tab):" />
        <Picker id="viewports" label="Viewports (Shift+Tab):" />
      </div>
      <PanelTitle>Selection Filter</PanelTitle>
      <div className="grid h-[88px] shrink-0 auto-rows-fr grid-cols-[71px_1fr] pt-[4px] pb-[3px] pl-[3px]">
        {filters.map(([label, on]) => <Check key={label} label={label} checked={on} />)}
      </div>
    </aside>
  );
}

function Editor() {
  return (
    <section aria-label="PCB Editor" className="flex min-h-0 flex-1 flex-col bg-[#efefef]">
      <header className="flex h-[35px] shrink-0 justify-end bg-white pt-[5px] text-[#aaa]">
        <button type="button" aria-label="Minimize editor" className="flex h-[10px] w-[39px] justify-center"><svg viewBox="0 0 10 10" className="size-[10px]" fill="none" stroke="currentColor"><path d="M0.500 4.500 H9.500" /></svg></button>
        <button type="button" aria-label="Restore editor" className="flex h-[10px] w-[39px] justify-center"><svg viewBox="0 0 10 10" className="size-[10px]" fill="none" stroke="currentColor"><path d="M1 3 h6 v6 h-6Z M3 3 V1 h6 v6 h-2" /></svg></button>
        <button type="button" aria-label="Close editor" className="flex h-[10px] w-[39px] justify-center"><svg viewBox="0 0 10 10" className="size-[10px]" fill="none" stroke="currentColor"><path d="M1 1 L9 9 M9 1 L1 9" /></svg></button>
      </header>
      <div className="h-[61px] shrink-0" />
      <div className="flex min-h-0 flex-1">
        <div className="flex w-[25px] shrink-0 flex-col justify-end pb-[17px]">
          <button type="button" aria-label="Layers manager" aria-pressed="true" className="flex h-[26px] w-[23px] items-center justify-center border border-l-0 border-[#2a7fc0] bg-[#a9d3f5]"><LayersGlyph /></button>
        </div>
        <EditorCanvas />
        <div role="toolbar" aria-label="Drawing tools" className="mr-[3px] flex w-[30px] shrink-0 flex-col items-center border-l border-[#cfcfcf] pt-[2px] pb-[12px]">
          {editorTools.map((tool, i) =>
            tool === null ? (
              <span key={i} className="my-[2px] h-px w-[22px] shrink-0 bg-[#a6a6a6]" />
            ) : (
              <button key={tool.label} type="button" aria-label={tool.label} aria-pressed={tool.active} className={tool.active ? "relative flex min-h-0 w-[27px] flex-1 items-center justify-center border border-[#2a7fc0] bg-[#a9d3f5]" : "relative flex min-h-0 w-[27px] flex-1 items-center justify-center"}>
                <svg viewBox="0 0 24 24" className="size-[21px]">{tool.icon}</svg>
                {["Route track", "Tune length", "Add dimension"].includes(tool.label) && <svg viewBox="16 16 8 8" className="absolute right-0 bottom-px size-[8px]">{corner}</svg>}
              </button>
            ),
          )}
        </div>
        <EditorPanel />
      </div>
      <dl className="grid h-[28px] shrink-0 grid-cols-[110px_75px_259px_64px_102px_275px_1fr] overflow-hidden pl-[5px] text-[10px] leading-[13px] whitespace-nowrap text-[#7a7a7a]">
        {[
          ["H2", "MountingHole_Pad"],
          ["Board Side", "Front"],
          ["Status:", "Attributes: exclude from pos files, exclude from BOM"],
          ["Rotation", "0"],
          ["Component Class", "<None>"],
          ["Footprint: MountingHole:MountingHole_3.7mm_Pad_Via", "3D-Shape: <none>"],
          ["Doc: Mounting Hole 3.7mm, generated by kicad-footprint-generator mountinghole.py", "Keywords: mountinghole"],
        ].map(([a, b]) => (
          <div key={a} className="pt-px"><dt>{a}</dt><dd>{b}</dd></div>
        ))}
      </dl>
      <footer className="grid h-[18px] shrink-0 grid-cols-[387px_65px_136px_215px_157px_52px_144px_1fr] divide-x divide-[#d8d8d8] border-t border-[#f8f8f8] text-[10px] leading-[17px] whitespace-nowrap">
        <span className="text-[9px]">File 'C:\Users\Asus\Desktop\PCB\28.09.2025\kim_sonath28.09.2025\nath2025\_autosa...</span>
        <span className="pl-[3px]">Z 1.22</span>
        <span className="flex gap-[5px] pl-[3px]"><span>X 186.0000</span><span>Y 35.5000</span></span>
        <span className="flex gap-[5px] pl-[3px]"><span>dx 186.0000</span><span>dy 35.5000</span><span>dist 189.3575</span></span>
        <span className="pl-[3px]">grid 0.5000</span>
        <span className="pl-[3px]">mm</span>
        <span className="pl-[3px]">Select item(s)</span>
        <span />
      </footer>
    </section>
  );
}

/* ---------- taskbar ---------- */

const apps: { name: string; icon: ReactNode; state?: "open" | "active" }[] = [
  { name: "File Explorer", icon: <g><path d="M2 4 h8 l2 2 h10 v3 h-20Z" fill="#e0a526" /><path d="M2 7 h20 v13 h-20Z" fill="#f8cf5c" /><path d="M5 20 v-6 q0 -2 2 -2 h10 q2 0 2 2 v6 h-3.500 v-4 h-7 v4Z" fill="#3d97dc" /></g> },
  { name: "Microsoft Store", icon: <g><path d="M8 5 V2.500 h8 V5" fill="none" stroke="#4db2ea" strokeWidth="1.600" /><rect x="1" y="4.500" width="22" height="18.500" rx="2.500" fill="#f4f4f4" /><path d="M7.500 9 h4 v4 h-4Z" fill="#f0512a" /><path d="M12.500 9 h4 v4 h-4Z" fill="#80bb20" /><path d="M7.500 14 h4 v4 h-4Z" fill="#1c9fe6" /><path d="M12.500 14 h4 v4 h-4Z" fill="#f8b818" /></g> },
  { name: "Outlook", icon: <g><path d="M5 8 L14 2 L23 8 V20 q0 2 -2 2 H8Z" fill="#1a5fb8" /><path d="M7 6 L15 2.500 L22 7 L14 14Z" fill="#7cc8f4" /><path d="M23 9 V20 q0 2 -2 2 H8 L23 12Z" fill="#38a8ec" /><rect x="0.500" y="7" width="13" height="13" rx="2" fill="#1270cc" /><circle cx="7" cy="13.500" r="3.300" fill="none" stroke="#fff" strokeWidth="1.900" /></g> },
  { name: "Multisim", icon: <g><rect x="1" y="1.500" width="22" height="21" rx="2" fill="#a81818" /><path d="M5 19 V5 h4 l3 6 3 -6 h4 V19 h-4 V12 l-3 5 -3 -5 v7Z" fill="#f6efec" /></g> },
  { name: "Chrome", icon: <g><circle cx="12" cy="12" r="11" fill="#e8e8e8" /><path d="M12 12 L2.500 6.500 A11 11 0 0 1 21.500 6.500 Z M2.500 6.500 L7.500 14.500Z" fill="#e33b2e" /><path d="M2.500 6.500 A11 11 0 0 0 11 23 L16.500 14.500 L7.500 14.500Z" fill="#2ca24c" /><path d="M21.500 6.500 A11 11 0 0 1 11 23 L17 12 L12 6.500Z" fill="#fbc116" /><circle cx="12" cy="12" r="5.300" fill="#fff" /><circle cx="12" cy="12" r="4.200" fill="#3e82ee" /></g> },
  { name: "YouTube", icon: <g><rect x="1" y="3" width="22" height="18" rx="4" fill="#f61414" /><path d="M9.500 8 L16 12.200 L9.500 16.500Z" fill="#fff" /></g> },
  { name: "TikTok", icon: <g><circle cx="12" cy="12" r="11" fill="#060606" /><path d="M13 4.500 v11 a3 3 0 1 1 -3 -3 M13 5 q1 4 5 4.500" fill="none" stroke="#2ae8e4" strokeWidth="2.200" transform="translate(-0.700 -0.500)" /><path d="M13 4.500 v11 a3 3 0 1 1 -3 -3 M13 5 q1 4 5 4.500" fill="none" stroke="#f42a5a" strokeWidth="2.200" transform="translate(0.700 0.500)" /><path d="M13 4.500 v11 a3 3 0 1 1 -3 -3 M13 5 q1 4 5 4.500" fill="none" stroke="#fff" strokeWidth="2.100" /></g> },
  { name: "Copilot", icon: <g><path d="M8 2 h6 q2 0 2.500 2 l-4 14 q-0.500 2 -2.500 2 h-4 q-5 0 -4 -5 l3 -10 q1 -3 3 -3Z" fill="#2f8cea" /><path d="M8 2 h6 l-3 8 q-1 3 -4 3 l-4.500 1 2.500 -9 q1 -3 3 -3Z" fill="#38c8c0" /><path d="M3 16 q3 4 8 1 l-0.500 3 h-4 q-4 0 -3.500 -4Z" fill="#f4c92c" /><path d="M16 22 h-6 q2 -1 2.500 -3 l3.500 -10 q1 -3 4 -3 q4 0 3 5 l-2.500 8 q-1 3 -4.500 3Z" fill="#c85cd8" /><path d="M12 19 l3 -6 q3 -2 7 2 l-1.500 4 q-1 3 -4.500 3 h-6 q2 -1 2 -3Z" fill="#f0667c" /></g> },
  { name: "Telegram", state: "open", icon: <g><circle cx="12" cy="12" r="10.500" fill="#2da2dc" /><path d="M4.500 12 L18.500 6 L16 18.500 L12 15.500 L9.500 17.500 L9 13.500Z" fill="#fff" /><path d="M9 13.500 L16 8.500 L10.500 14.500 L9.500 17.500Z" fill="#b8d8ea" /></g> },
  { name: "SolidWorks", state: "open", icon: <g><path d="M1 4 L8 0.500 L23 3 V20 L17 23.500 L1 21Z" fill="#c0161c" /><path d="M1 4 L8 0.500 L23 3 L17 6.500Z" fill="#f06a62" /><path d="M17 6.500 L23 3 V20 L17 23.500Z" fill="#8a0c10" /><text x="11.500" y="15" fontSize="10" fontWeight="700" textAnchor="middle" fill="#fff" fontFamily="Liberation Sans, sans-serif">SW</text><text x="12" y="22" fontSize="7" fontWeight="700" textAnchor="middle" fill="#fff" fontFamily="Liberation Sans, sans-serif">2025</text></g> },
  { name: "KiCad", state: "active", icon: <g><rect x="1" y="1" width="22" height="22" rx="3.500" fill="#2a45c0" /><text x="12" y="17.500" fontSize="15" fontWeight="700" textAnchor="middle" fill="#fff" fontFamily="Open Sans, sans-serif">Ki</text></g> },
];

const trayIcons: { name: string; icon: ReactNode }[] = [
  { name: "Hidden icons", icon: <path d="M2 11 L8 5 L14 11" /> },
  { name: "Volume", icon: <path d="M1.500 6 H4 L7.500 3 V13 L4 10 H1.500Z M9.500 6 Q11 8 9.500 10 M11.500 4.500 Q14 8 11.500 11.500 M13.500 3 Q17 8 13.500 13" /> },
  { name: "Meet now", icon: <path d="M4 2 Q8 0 12 2 M3 5 h8 v8 h-8Z M11 8 l3 -2 v6 l-3 -2 M5 15.500 h6 M6 7.500 h2.500 v3 h-2.500Z" /> },
  { name: "Battery", icon: <path d="M1 5 V3 M4 5 V3 M0.500 5 h4 v2 q-2 2.500 -4 0Z M2.500 8 V12 M7 4 h8 v8 h-8Z M8.500 6 l4 4 M12.500 6 l-4 4" /> },
  { name: "Wi-Fi", icon: <path d="M2 13 Q3 4 13 3 M5 13 Q6 7.500 13 6.500 M8 13 Q8.500 10.500 13 9.800 M11.500 13 l1 -0.500" /> },
  { name: "Pen", icon: <path d="M1 11 Q3 8 5 10 Q7 14 10 10 M6 10 L12 2 q2.500 -0.500 2 2 L9 11.500 Q6 16 4.500 14Z" /> },
];

function Taskbar() {
  return (
    <nav aria-label="Taskbar" className="flex h-[33px] shrink-0 items-stretch bg-linear-to-r from-[#1d373c] from-50% to-[#1a2440] text-white">
      <button type="button" aria-label="Start" className="flex w-9 shrink-0 items-center justify-center pr-[6px]">
        <svg viewBox="0 0 14 14" className="size-[14px]" fill="#fff"><path d="M0 2 L6 1.200 V6.600 H0Z M6.800 1.100 L14 0 V6.600 H6.800Z M0 7.400 H6 V12.800 L0 12Z M6.800 7.400 H14 V14 L6.800 12.900Z" /></svg>
      </button>
      <label className="relative flex w-[241px] shrink-0 items-center overflow-hidden bg-[#f1f1f1] pl-[9px] text-[#3a3a3a]">
        <svg viewBox="0 0 14 14" className="size-[14px]" fill="none" stroke="#333" strokeWidth="1.200" aria-hidden="true"><circle cx="8.500" cy="5.500" r="4.400" /><path d="M5.300 8.700 L0.800 13.200" /></svg>
        <input type="search" aria-label="Search" placeholder="Type here to search" className="w-[140px] bg-transparent pl-[10px] font-['Noto_Sans',sans-serif] text-[12px] placeholder:text-[#3a3a3a]" />
        <svg viewBox="0 0 64 33" className="absolute top-0 right-0 h-[33px] w-16" aria-hidden="true">
          <defs>
            <radialGradient id="planet" cx="0.600" cy="0.150" r="0.900"><stop offset="0" stopColor="#f78a5c" /><stop offset="0.500" stopColor="#d8407c" /><stop offset="1" stopColor="#7a2a8c" /></radialGradient>
            <radialGradient id="sky" cx="0.550" cy="0.900" r="0.550"><stop offset="0" stopColor="#1c3478" /><stop offset="0.550" stopColor="#3d5ca4" stopOpacity="0.850" /><stop offset="1" stopColor="#b4c4e8" stopOpacity="0" /></radialGradient>
          </defs>
          <rect width="64" height="33" fill="url(#sky)" />
          <circle cx="46" cy="2" r="21" fill="url(#planet)" />
          <path d="M4 4 Q14 5 24 16 L31 27 L22 22 Q8 14 4 4Z" fill="#c9c3d0" stroke="#7c6c80" strokeWidth="0.800" />
          <path d="M12 14 l-4 3 8 2Z M22 12 l6 0 -2 5Z" fill="#c0504c" />
          <circle cx="7" cy="26" r="4" fill="#4b5c78" /><circle cx="44" cy="28" r="1.800" fill="#cfe0ff" /><circle cx="24" cy="30" r="1" fill="#fff" /><circle cx="52" cy="27" r="0.800" fill="#fff" />
        </svg>
      </label>
      <div className="my-[6px] ml-[4px] w-[3px] shrink-0 border-x border-[#48595e]" />
      <div className="ml-[8px] grid w-[457px] shrink-0 grid-cols-11">
        {apps.map((app) => (
          <button
            key={app.name}
            type="button"
            aria-label={app.name}
            className={
              app.state === "active"
                ? "flex items-center justify-center border-b-2 border-[#f08a24] bg-[#b3682f] pt-[2px]"
                : app.state === "open"
                  ? "mx-[3px] flex items-center justify-center border-b-2 border-[#7fb4dc] pt-[2px]"
                  : "flex items-center justify-center"
            }
          >
            <svg viewBox="0 0 24 24" className="size-5">{app.icon}</svg>
          </button>
        ))}
      </div>
      <div className="ml-auto flex shrink-0 items-center pr-[18px]">
        <span className="mr-[7px] h-[18px] w-[3px] border-x border-[#48595e]" />
        <span className="w-[45px] text-[10px]">Desktop</span>
        <button type="button" aria-label="More toolbars" className="mb-[14px] w-[26px] text-left text-[12px] leading-[12px]">»</button>
        <button type="button" className="flex w-[71px] items-center gap-[6px] text-[12px]">
          <svg viewBox="0 0 22 22" className="size-[22px]" aria-hidden="true"><path d="M9 1 Q8 8 17 9 Q14 13 9 12 Q3 8 9 1Z" fill="#f6b048" /><path d="M5 20 Q1 20 1 16 Q1 13 5 12.500 Q7 8.500 11 10 Q14 7.500 16 12 Q21 12 21 16 Q21 20 17 20Z" fill="#a9cdf6" /></svg>
          27°C
        </button>
        {trayIcons.map((t) => (
          <button key={t.name} type="button" aria-label={t.name} className="flex w-[21px] justify-center">
            <svg viewBox="0 0 16 16" className="size-[13px]" fill="none" stroke="#e4e8ee" strokeWidth="1.200">{t.icon}</svg>
          </button>
        ))}
        <button type="button" className="w-[34px] text-center text-[10px] leading-[20px]">ខ្មែរ</button>
        <time className="w-[52px] text-center text-[10px] leading-[15px]">10:15 PM<br />10/4/2025</time>
        <button type="button" aria-label="Notifications" className="ml-[11px]">
          <svg viewBox="0 0 14 14" className="size-[14px]" fill="none" stroke="#e4e8ee" strokeWidth="1.200"><path d="M1 1.500 H13 V11 H9 V13.300 L6.500 11 H1Z" /></svg>
        </button>
      </div>
    </nav>
  );
}

export default function App() {
  return (
    <div className="relative flex h-screen min-h-[724px] min-w-[1180px] flex-col overflow-hidden font-['Roboto','Noto_Sans',sans-serif] text-[#1f1f1f]">
      <Editor />
      <Viewer />
      <Taskbar />
    </div>
  );
}
